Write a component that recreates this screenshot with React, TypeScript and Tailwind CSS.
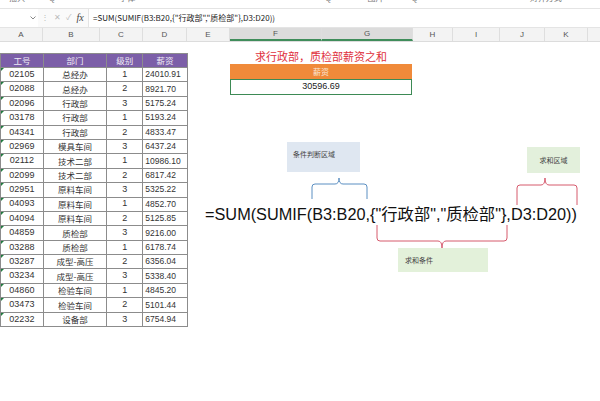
import React from 'react'

const ROWS: [string, string, string, string][] = [
  ['02105', '总经办', '1', '24010.91'],
  ['02088', '总经办', '2', '8921.70'],
  ['02096', '行政部', '3', '5175.24'],
  ['03178', '行政部', '1', '5193.24'],
  ['04341', '行政部', '2', '4833.47'],
  ['02969', '模具车间', '3', '6437.24'],
  ['02112', '技术二部', '1', '10986.10'],
  ['02099', '技术二部', '2', '6817.42'],
  ['02951', '原料车间', '3', '5325.22'],
  ['04093', '原料车间', '1', '4852.70'],
  ['04094', '原料车间', '2', '5125.85'],
  ['04859', '质检部', '3', '9216.00'],
  ['03288', '质检部', '1', '6178.74'],
  ['03287', '成型-高压', '2', '6356.04'],
  ['03234', '成型-高压', '3', '5338.40'],
  ['04860', '检验车间', '1', '4845.20'],
  ['03473', '检验车间', '2', '5101.44'],
  ['02232', '设备部', '3', '6754.94'],
]

const COLS = [
  { l: 'A', w: 'w-[43px]' },
  { l: 'B', w: 'w-[57px]' },
  { l: 'C', w: 'w-[43px]' },
  { l: 'D', w: 'w-[44px]' },
  { l: 'E', w: 'w-[43px]' },
  { l: 'F', w: 'w-[92px]', sel: true },
  { l: 'G', w: 'w-[91px]', sel: true },
  { l: 'H', w: 'w-[40px]' },
  { l: 'I', w: 'w-[47px]' },
  { l: 'J', w: 'w-[45px]' },
  { l: 'K', w: 'w-[43px]' },
  { l: '', w: 'w-[20px]' },
]

const CJK = "font-['Noto_Sans_CJK_SC',sans-serif]"

function Cell({ w, children, className = '' }: { w: string; children: React.ReactNode; className?: string }) {
  return (
    <div className={`${w} h-full flex items-center justify-center border-r border-[#8c8c8c] ${className}`}>
      {children}
    </div>
  )
}

export default function App() {
  return (
    <div className="relative w-[600px] h-[401px] overflow-hidden bg-white text-[#333] font-['Liberation_Sans','Noto_Sans_CJK_SC',sans-serif]">
      {/* ribbon remnants, cut off at the top */}
      <div className="h-[8px] flex items-start text-[8px] leading-none text-[#777] overflow-hidden">
        <span className="-mt-[5px] ml-[9px]">插入</span>
        <span className="-mt-[5px] ml-[24px]">Q</span>
        <span className="-mt-[5px] ml-[64px]">字体</span>
        <span className="-mt-[5px] ml-[190px]">Q</span>
        <span className="-mt-[5px] ml-[36px]">图片</span>
        <span className="-mt-[5px] ml-[28px]">Q</span>
        <span className="-mt-[5px] ml-[112px]">对齐方式</span>
      </div>

      {/* formula bar */}
      <div className="h-[20px] flex items-center border-t border-b border-[#e4e4e4] bg-[#fafafa]">
        <div className="w-[38px] h-full flex items-center justify-end pr-[2px] bg-white">
          <svg width="6" height="4" viewBox="0 0 6 4">
            <path d="M0.5 0.5 L3 3 L5.5 0.5" fill="none" stroke="#888" strokeWidth="1" />
          </svg>
        </div>
        <div className="w-[50px] shrink-0 h-full flex items-center gap-[5px] pl-[3px] text-[#bbb] text-[8px]">
          <span>⋮</span>
          <span>✕</span>
          <span>✓</span>
          <span className="text-[#444] italic font-['Liberation_Serif',serif] text-[10px] leading-none">fx</span>
        </div>
        <div className={`flex-1 h-full flex items-center pl-[4px] bg-white border-l border-[#e4e4e4] text-[8px] text-[#222] ${CJK}`}>
          {'=SUM(SUMIF(B3:B20,{"行政部","质检部"},D3:D20))'}
        </div>
      </div>

      {/* column headers */}
      <div className="h-[14px] flex bg-[#f3f3f3] border-b border-[#dcdcdc] text-[8px] text-[#555]">
        {COLS.map((c, i) => (
          <div
            key={i}
            className={`${c.w} shrink-0 h-full flex items-center justify-center border-r border-[#dedede] ${
              c.sel ? 'bg-[#dcdcdc] border-b-2 border-b-[#3f8d5b]' : ''
            }`}
          >
            {c.l}
          </div>
        ))}
      </div>

      {/* sheet */}
      <div className="flex pt-[11px]">
        <div className="w-[188px] border-t border-l border-[#8c8c8c] text-[9px]">
          <div className={`h-[14px] flex bg-[#7c5fa8] text-[#f0ecf6] text-[8.5px] border-b border-[#8c8c8c] ${CJK}`}>
            <Cell w="w-[43px]">工号</Cell>
            <Cell w="w-[64px]">部门</Cell>
            <Cell w="w-[36px]">级别</Cell>
            <Cell w="w-[45px]">薪资</Cell>
          </div>
          {ROWS.map((r) => (
            <div key={r[0]} className="relative h-[14.4px] flex border-b border-[#8c8c8c]">
              <span className="absolute left-0 top-0 w-0 h-0 border-t-[3px] border-r-[3px] border-t-[#1f7a3e] border-r-transparent" />
              <Cell w="w-[43px]">{r[0]}</Cell>
              <Cell w="w-[64px]" className={`${CJK} text-[8.5px]`}>{r[1]}</Cell>
              <Cell w="w-[36px]">{r[2]}</Cell>
              <Cell w="w-[45px]" className="justify-start pl-[2px] text-[8.5px]">{r[3]}</Cell>
            </div>
          ))}
        </div>

        <div className="ml-[42px] w-[182px] flex flex-col">
          <div className={`-mt-[4px] h-[15px] flex items-center pl-[25px] text-[11px] text-[#e0313d] ${CJK}`}>
            求行政部，质检部薪资之和
          </div>
          <div className={`h-[15px] bg-[#f08a3a] text-[#fbe6d5] text-[8px] flex items-center justify-center ${CJK}`}>
            薪资
          </div>
          <div className="h-[16px] border border-[#3d8a55] flex items-center justify-center text-[9px] text-[#222]">
            30596.69
          </div>
        </div>
      </div>

      {/* annotation diagram */}
      <div className={`absolute left-[287px] top-[142px] w-[73px] h-[30px] bg-[#dfe7f1] text-[7px] text-[#444] pl-[6px] pt-[7px] ${CJK}`}>
        条件判断区域
      </div>
      <div className={`absolute left-[527px] top-[147px] w-[53px] h-[26px] bg-[#e3f0dc] text-[7px] text-[#444] flex items-center justify-center ${CJK}`}>
        求和区域
      </div>
      <div className={`absolute left-[398px] top-[248px] w-[90px] h-[24px] bg-[#e3f1da] text-[7px] text-[#444] flex items-center pl-[7px] ${CJK}`}>
        求和条件
      </div>

      <svg className="absolute left-0 top-0" width="600" height="401" viewBox="0 0 600 401" fill="none">
        {/* blue brace under 条件判断区域 */}
        <path
          d="M312 199 V187 Q312 184 315 184 H335 Q339 184 339 178 Q339 184 343 184 H364 Q367 184 367 187 V199"
          stroke="#5b8fc2"
          strokeWidth="1"
        />
        {/* red brace under 求和区域 */}
        <path
          d="M517 205 V188 Q517 185 520 185 H541 Q545 185 545 178 Q545 185 549 185 H574 Q577 185 577 188 V205"
          stroke="#d65a6d"
          strokeWidth="1"
        />
        {/* red brace above 求和条件 */}
        <path
          d="M377 225 V238 Q377 241 380 241 H438 Q442 241 442 248 Q442 241 446 241 H504 Q507 241 507 238 V225"
          stroke="#d65a6d"
          strokeWidth="1"
        />
      </svg>

      <div className="absolute left-[205px] top-[203px] text-[16.3px] leading-[20px] text-[#111] whitespace-nowrap">
        {'=SUM(SUMIF(B3:B20,{"'}
        <span className={CJK}>行政部</span>
        {'","'}
        <span className={CJK}>质检部</span>
        {'"},D3:D20))'}
      </div>
    </div>
  )
}
